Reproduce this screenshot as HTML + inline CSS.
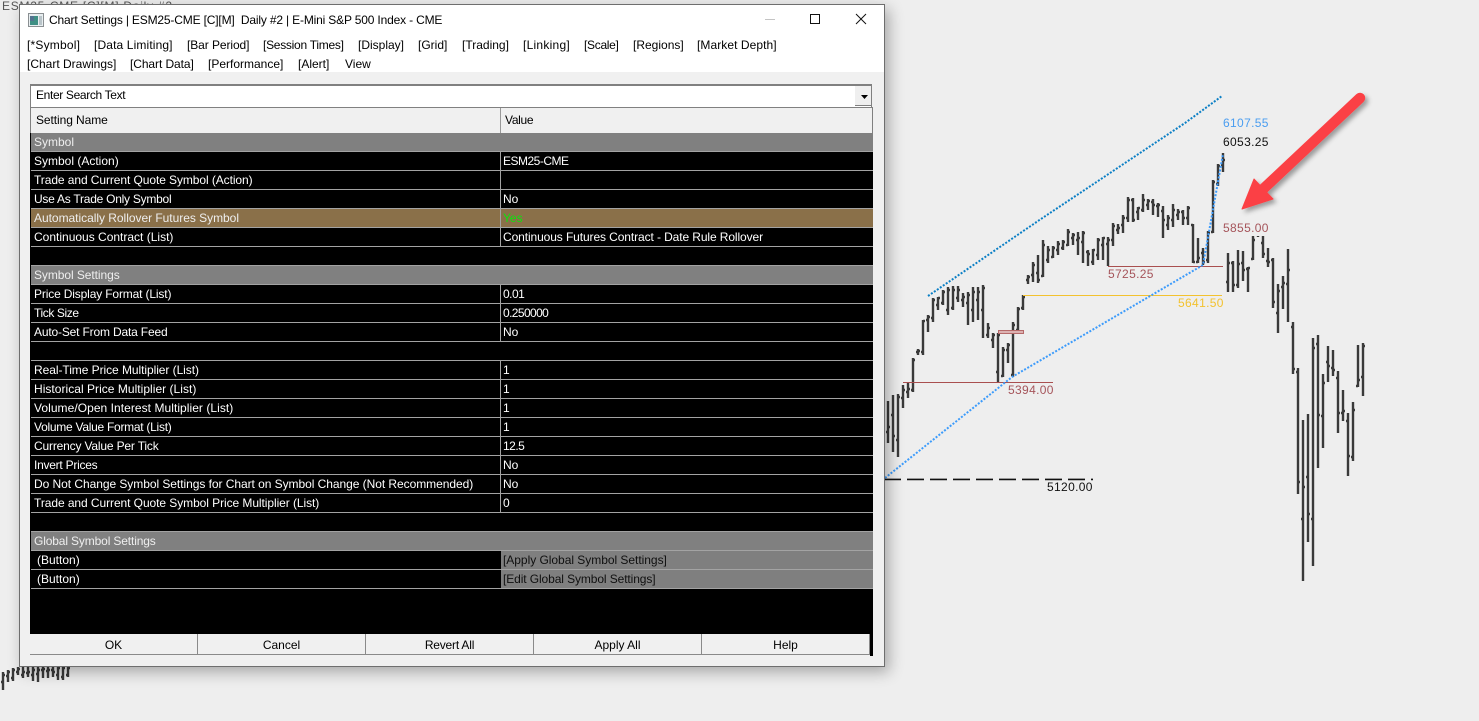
<!DOCTYPE html>
<html><head><meta charset="utf-8"><title>Chart Settings</title>
<style>
html,body{margin:0;padding:0;width:1479px;height:721px;overflow:hidden;background:#eeeeee}
body{position:relative;font:12px/18px "Liberation Sans",sans-serif;color:#000}
#chart{position:absolute;left:0;top:0}
#win{position:absolute;left:19px;top:4px;width:864px;height:661px;border:1px solid #6e6e6e;background:#f0f0f0;box-shadow:4px 5px 14px rgba(0,0,0,.3)}
.a{position:absolute;white-space:pre;line-height:18px}
#top{position:absolute;left:0;top:0;width:864px;height:67px;background:#fff}
.r{position:absolute;left:11px;width:842px;height:18px;border-bottom:1px solid #a3a3a3;background:#000;color:#fff}
.r .n{position:absolute;left:3px;top:0;white-space:pre}
.r .v{position:absolute;left:472px;top:0;white-space:pre}
.r i{position:absolute;left:469px;top:0;width:1px;height:19px;background:#a3a3a3}
.s{background:#808080;color:#eee}
.s i{display:none}
.o{background:#8a7049;color:#eee}
.o .v{color:#0de30d}
.b .g{position:absolute;left:470px;top:0;width:372px;height:18px;background:#7f7f7f}
.b .v{color:#101010}
.btn{position:absolute;top:629px;width:167px;height:20px;line-height:23px;background:#f0f0f0;text-align:center;border-right:1px solid #8a8a8a;border-bottom:1px solid #8a8a8a}
</style></head><body>
<svg id="chart" width="1479" height="721" viewBox="0 0 1479 721">
<text x="2" y="10" font-family="Liberation Sans" font-size="12" letter-spacing=".75" fill="#555">ESM25-CME [C][M] Daily #2</text>
<path fill="none" stroke="#3a3a3a" stroke-width="2.4" d="M888 401V443M886 432h2M888 427h2M893 395V452M891 415h2M893 436h2M898 394V457M896 440h2M898 397h2M903 385V408M901 398h2M903 390h2M908 382V398M906 392h2M908 389h2M913 358V392M911 390h2M913 360h2M918 349V355M916 352h2M918 351h2M923 320V355M921 352h2M923 321h2M928 315V332M926 320h2M928 317h2M933 298V322M931 318h2M933 300h2M938 297V310M936 305h2M938 298h2M943 290V305M941 303h2M943 292h2M948 287V315M946 310h2M948 290h2M953 286V310M951 308h2M953 290h2M958 286V302M956 298h2M958 290h2M963 293V307M961 300h2M963 297h2M968 292V325M966 303h2M968 295h2M973 287V322M971 310h2M973 292h2M978 287V320M976 300h2M978 292h2M983 285V338M981 310h2M983 288h2M988 323V338M986 335h2M988 328h2M993 333V348M991 340h2M993 335h2M998 333V382M996 372h2M998 335h2M1003 347V377M1001 376h2M1003 350h2M1008 343V363M1006 350h2M1008 345h2M1013 322V377M1011 375h2M1013 325h2M1018 307V331M1016 330h2M1018 309h2M1023 295V310M1021 308h2M1023 297h2M1028 275V284M1026 280h2M1028 277h2M1033 262V282M1031 275h2M1033 265h2M1038 255V283M1036 273h2M1038 280h2M1043 240V277M1041 276h2M1043 245h2M1048 246V263M1046 260h2M1048 250h2M1053 246V258M1051 257h2M1053 248h2M1058 241V255M1056 250h2M1058 244h2M1063 240V250M1061 248h2M1063 242h2M1068 229V246M1066 245h2M1068 232h2M1073 233V245M1071 238h2M1073 235h2M1078 232V255M1076 240h2M1078 238h2M1083 231V263M1081 242h2M1083 233h2M1088 250V266M1086 252h2M1088 254h2M1093 249V265M1091 262h2M1093 250h2M1098 238V260M1096 255h2M1098 240h2M1103 237V260M1101 245h2M1103 238h2M1108 237V266M1106 244h2M1108 240h2M1113 223V246M1111 240h2M1113 226h2M1118 224V234M1116 230h2M1118 228h2M1123 215V233M1121 225h2M1123 218h2M1128 197V222M1126 218h2M1128 200h2M1133 198V222M1131 200h2M1133 220h2M1138 207V220M1136 212h2M1138 208h2M1143 194V212M1141 210h2M1143 200h2M1148 199V210M1146 205h2M1148 201h2M1153 199V215M1151 202h2M1153 205h2M1158 203V217M1156 206h2M1158 205h2M1163 206V238M1161 211h2M1163 220h2M1168 215V230M1166 225h2M1168 218h2M1173 204V227M1171 220h2M1173 210h2M1178 209V220M1176 215h2M1178 212h2M1183 210V225M1181 212h2M1183 218h2M1188 206V225M1186 218h2M1188 208h2M1193 224V263M1191 225h2M1193 262h2M1198 238V263M1196 262h2M1198 258h2M1203 248V265M1201 253h2M1203 262h2M1208 231V263M1206 260h2M1208 233h2M1213 180V233M1211 232h2M1213 182h2M1218 164V186M1216 184h2M1218 166h2M1223 153V172M1221 165h2M1223 160h2M1228 253V292M1226 282h2M1228 263h2M1233 261V292M1231 263h2M1233 285h2M1238 250V288M1236 285h2M1238 264h2M1243 251V281M1241 263h2M1243 270h2M1248 267V292M1246 269h2M1248 268h2M1253 236V260M1251 259h2M1253 240h2M1258 236V237M1263 236V258M1261 243h2M1263 254h2M1268 248V267M1266 261h2M1268 262h2M1273 258V308M1271 260h2M1273 302h2M1278 284V333M1276 313h2M1278 291h2M1283 276V309M1281 287h2M1283 283h2M1288 249V322M1286 284h2M1288 270h2M1293 322V374M1291 327h2M1293 369h2M1298 368V494M1296 372h2M1298 482h2M1303 420V581M1301 519h2M1303 487h2M1308 414V542M1306 477h2M1308 514h2M1313 338V566M1311 519h2M1313 348h2M1318 335V468M1316 344h2M1318 415h2M1323 374V448M1321 416h2M1323 383h2M1328 346V382M1326 362h2M1328 366h2M1333 350V376M1331 368h2M1333 370h2M1338 371V433M1336 378h2M1338 413h2M1343 390V421M1341 413h2M1343 411h2M1348 413V476M1346 421h2M1348 456h2M1353 402V461M1351 457h2M1353 410h2M1358 345V387M1356 386h2M1358 380h2M1363 343V396M1361 377h2M1363 346h2M3 672V690M1 682h2M3 675h2M8 670V682M6 676h2M8 672h2M13 668V681M11 678h2M13 670h2M18 667V675M16 672h2M18 669h2M23 667V678M21 675h2M23 672h2M28 667V677M26 673h2M28 672h2M33 667V681M31 675h2M33 670h2M38 667V682M36 674h2M38 670h2M43 667V678M41 670h2M43 669h2M48 667V678M46 671h2M48 670h2M53 667V677M51 670h2M53 672h2M58 667V680M56 675h2M58 668h2M63 667V680M61 677h2M63 668h2M68 667V677M66 675h2M68 668h2"/>
<g fill="none" shape-rendering="crispEdges">
<path d="M903 382.5H1053M1108 266.5H1223" stroke="#a94f4f"/>
<path d="M1023 295.5H1222" stroke="#f3c22f"/>
<rect x="998.5" y="330.5" width="25" height="3" fill="#dcb1b1" stroke="#b56a6a"/>
</g>
<path d="M885 479.4H1093" fill="none" stroke="#111" stroke-width="1.6" stroke-dasharray="16 6 17 6 17 6 17 6 17 6 17 6 17 6 17 6 17 6 17 6"/>
<g fill="none" stroke-width="2">
<path d="M928 296L1038 221L1185 123L1222 96" stroke="#0b7fc5" stroke-dasharray="2 1.6"/>
<path d="M885 478L1012 377L1203 265L1223 154" stroke="#3c9bfb" stroke-dasharray="2 1.6"/>
</g>
<g font-family="Liberation Sans" font-size="12" letter-spacing=".35">
<text x="1223" y="127" fill="#4a9df0">6107.55</text>
<text x="1223" y="146" fill="#111">6053.25</text>
<text x="1223" y="232" fill="#a5545a">5855.00</text>
<text x="1108" y="278" fill="#a5545a">5725.25</text>
<text x="1178" y="307" fill="#f3c22f">5641.50</text>
<text x="1008" y="394" fill="#a5545a">5394.00</text>
<text x="1047" y="491" fill="#111">5120.00</text>
</g>
<defs><filter id="sh" x="-20%" y="-20%" width="150%" height="150%"><feDropShadow dx="3" dy="3" stdDeviation="2.5" flood-color="#000" flood-opacity=".35"/></filter></defs>
<g filter="url(#sh)">
<path d="M1360 98L1260 192" stroke="#fb4044" stroke-width="10.5" stroke-linecap="round" fill="none"/>
<path d="M1242 209L1254 179L1273 199Z" fill="#fb4044" stroke="#fb4044" stroke-width="1" stroke-linejoin="round"/>
</g>
</svg>
<div id="win">
<div id="top"></div>
<svg style="position:absolute;left:8px;top:8px" width="16" height="14" viewBox="0 0 16 14"><rect x=".5" y=".5" width="15" height="13" fill="#e8eef0" stroke="#8a8f92"/><rect x="2" y="3" width="8" height="9" fill="#3f8f84"/><rect x="2" y="3" width="4" height="5" fill="#52738f"/><rect x="11" y="3" width="3" height="9" fill="#b9c4c9"/></svg>
<div class="a" style="left:29px;top:6px;letter-spacing:-.17px" id="ttl">Chart Settings | ESM25-CME [C][M]  Daily #2 | E-Mini S&amp;P 500 Index - CME</div>
<svg style="position:absolute;left:740px;top:8px" width="110" height="14" viewBox="0 0 110 14" fill="none"><path d="M5 6.5H15" stroke="#c4c4c4"/><rect x="50.5" y="1.5" width="9" height="9" stroke="#111"/><path d="M96 1L106 11M106 1L96 11" stroke="#111"/></svg>
<div class="a" style="left:7px;top:31px;letter-spacing:.2px">[*Symbol]</div>
<div class="a" style="left:74px;top:31px;letter-spacing:.13px">[Data Limiting]</div>
<div class="a" style="left:167px;top:31px;letter-spacing:-.08px">[Bar Period]</div>
<div class="a" style="left:243px;top:31px;letter-spacing:-.27px">[Session Times]</div>
<div class="a" style="left:338px;top:31px">[Display]</div>
<div class="a" style="left:398px;top:31px">[Grid]</div>
<div class="a" style="left:442px;top:31px">[Trading]</div>
<div class="a" style="left:503px;top:31px;letter-spacing:.25px">[Linking]</div>
<div class="a" style="left:564px;top:31px;letter-spacing:-.3px">[Scale]</div>
<div class="a" style="left:613px;top:31px">[Regions]</div>
<div class="a" style="left:677px;top:31px;letter-spacing:.07px">[Market Depth]</div>
<div class="a" style="left:7px;top:50px">[Chart Drawings]</div>
<div class="a" style="left:110px;top:50px;letter-spacing:-.08px">[Chart Data]</div>
<div class="a" style="left:188px;top:50px">[Performance]</div>
<div class="a" style="left:278px;top:50px">[Alert]</div>
<div class="a" style="left:325px;top:50px">View</div>

<div style="position:absolute;left:10px;top:79px;width:840px;height:21px;background:#fff;border:1px solid #808080;border-top:2px solid #808080"></div>
<div class="a" style="left:16px;top:81px;letter-spacing:-.35px">Enter Search Text</div>
<div style="position:absolute;left:835px;top:81px;width:16px;height:19px;background:#efefef;border-bottom:1px solid #808080"></div>
<svg style="position:absolute;left:841px;top:90px" width="7" height="4"><path d="M0 0H7L3.5 4Z" fill="#000"/></svg>

<div style="position:absolute;left:10px;top:102px;width:841px;height:25px;background:#f0f0f0;border:1px solid #808080;border-bottom:2px solid #8a8a8a"></div>
<div style="position:absolute;left:480px;top:103px;width:1px;height:25px;background:#999"></div>
<div class="a" style="left:16px;top:106px;letter-spacing:-.08px">Setting Name</div>
<div class="a" style="left:485px;top:106px;letter-spacing:-.3px">Value</div>

<div style="position:absolute;left:10px;top:128px;width:843px;height:501px;background:#000"></div>
<div class="r s" style="top:128px"><span class="n">Symbol</span></div>
<div class="r" style="top:147px"><span class="n">Symbol (Action)</span><i></i><span class="v" style="letter-spacing:-.5px">ESM25-CME</span></div>
<div class="r" style="top:166px"><span class="n" style="letter-spacing:-.08px">Trade and Current Quote Symbol (Action)</span><i></i></div>
<div class="r" style="top:185px"><span class="n" style="letter-spacing:-.25px">Use As Trade Only Symbol</span><i></i><span class="v">No</span></div>
<div class="r o" style="top:204px"><span class="n" style="letter-spacing:-.03px">Automatically Rollover Futures Symbol</span><i></i><span class="v">Yes</span></div>
<div class="r" style="top:223px"><span class="n">Continuous Contract (List)</span><i></i><span class="v" style="letter-spacing:-.1px">Continuous Futures Contract - Date Rule Rollover</span></div>
<div class="r" style="top:242px"></div>
<div class="r s" style="top:261px"><span class="n" style="letter-spacing:-.07px">Symbol Settings</span></div>
<div class="r" style="top:280px"><span class="n" style="letter-spacing:-.15px">Price Display Format (List)</span><i></i><span class="v" style="letter-spacing:-.5px">0.01</span></div>
<div class="r" style="top:299px"><span class="n" style="letter-spacing:-.4px">Tick Size</span><i></i><span class="v" style="letter-spacing:-.6px">0.250000</span></div>
<div class="r" style="top:318px"><span class="n" style="letter-spacing:-.17px">Auto-Set From Data Feed</span><i></i><span class="v">No</span></div>
<div class="r" style="top:337px"></div>
<div class="r" style="top:356px"><span class="n" style="letter-spacing:-.06px">Real-Time Price Multiplier (List)</span><i></i><span class="v">1</span></div>
<div class="r" style="top:375px"><span class="n" style="letter-spacing:.03px">Historical Price Multiplier (List)</span><i></i><span class="v">1</span></div>
<div class="r" style="top:394px"><span class="n" style="letter-spacing:.05px">Volume/Open Interest Multiplier (List)</span><i></i><span class="v">1</span></div>
<div class="r" style="top:413px"><span class="n" style="letter-spacing:-.27px">Volume Value Format (List)</span><i></i><span class="v">1</span></div>
<div class="r" style="top:432px"><span class="n" style="letter-spacing:-.17px">Currency Value Per Tick</span><i></i><span class="v" style="letter-spacing:-.5px">12.5</span></div>
<div class="r" style="top:451px"><span class="n" style="letter-spacing:-.25px">Invert Prices</span><i></i><span class="v">No</span></div>
<div class="r" style="top:470px"><span class="n" style="letter-spacing:-.05px">Do Not Change Symbol Settings for Chart on Symbol Change (Not Recommended)</span><i></i><span class="v">No</span></div>
<div class="r" style="top:489px"><span class="n" style="letter-spacing:-.07px">Trade and Current Quote Symbol Price Multiplier (List)</span><i></i><span class="v">0</span></div>
<div class="r" style="top:508px"></div>
<div class="r s" style="top:527px"><span class="n" style="letter-spacing:-.14px">Global Symbol Settings</span></div>
<div class="r b" style="top:546px"><span class="n" style="left:6px">(Button)</span><div class="g"></div><span class="v" style="letter-spacing:-.03px">[Apply Global Symbol Settings]</span></div>
<div class="r b" style="top:565px"><span class="n" style="left:6px">(Button)</span><div class="g"></div><span class="v" style="letter-spacing:-.1px">[Edit Global Symbol Settings]</span></div>

<div class="btn" style="left:10px">OK</div>
<div class="btn" style="left:178px">Cancel</div>
<div class="btn" style="left:346px"><span style="letter-spacing:-.2px">Revert All</span></div>
<div class="btn" style="left:514px">Apply All</div>
<div class="btn" style="left:682px">Help</div>
<div style="position:absolute;left:850px;top:629px;width:3px;height:22px;background:#000"></div>
</div>
</body></html>
